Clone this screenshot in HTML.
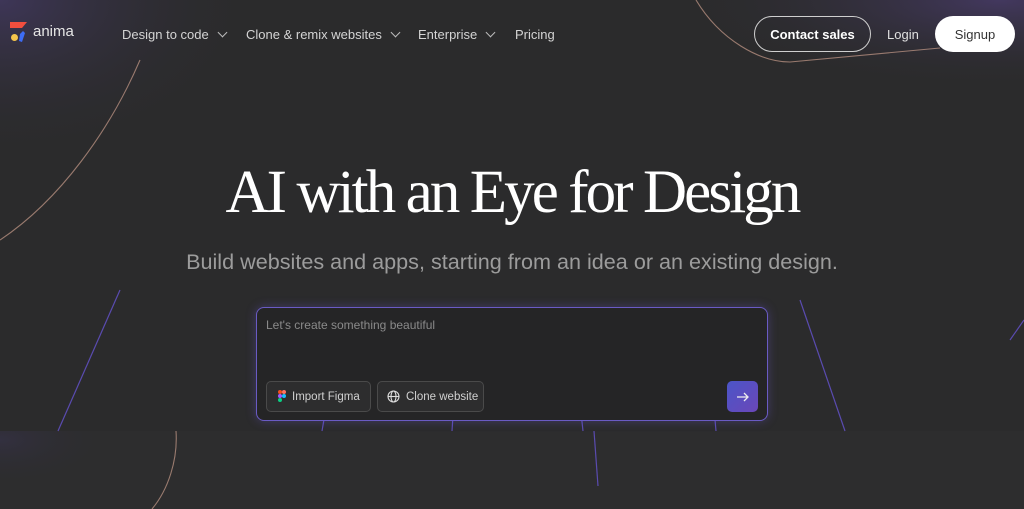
<!DOCTYPE html>
<html><head><meta charset="utf-8"><style>
*{margin:0;padding:0;box-sizing:border-box}
body{width:1024px;height:509px;overflow:hidden;background:#2b2b2c;font-family:"Liberation Sans",sans-serif;position:relative}
.bg{position:absolute;left:0;top:0}
.nav{position:absolute;top:0;left:0;width:1024px;height:68px}
.nav a{position:absolute;color:#d4d4d4;font-size:13px;top:27px;text-decoration:none}
.chev{display:inline-block;width:7px;height:7px;border-right:1.4px solid #bbb;border-bottom:1.4px solid #bbb;transform:rotate(45deg);margin-left:10px;position:relative;top:-3px}
.btn{position:absolute;border-radius:18px;font-size:13px;font-weight:bold;display:flex;align-items:center;justify-content:center}
h1{position:absolute;top:158px;left:0;width:1024px;text-align:center;font-family:"Liberation Serif",serif;font-weight:normal;color:#fff;font-size:61px;letter-spacing:-2.9px}
.sub{position:absolute;top:249px;left:0;width:1024px;text-align:center;color:#9c9c9c;font-size:21.6px}
.box{position:absolute;left:256px;top:307px;width:512px;height:114px;border:1px solid #6a5bc4;border-radius:8px;background:#252526;box-shadow:0 0 10px rgba(110,90,220,.35)}
.ph{position:absolute;left:9px;top:10px;color:#8a8a8a;font-size:12px}
.chip{position:absolute;top:73px;height:31px;border:1px solid #4a4a4a;border-radius:5px;background:#2d2d2e;color:#d0d0d0;font-size:11.5px;display:flex;align-items:center}
.go{position:absolute;left:470px;top:73px;width:31px;height:31px;border-radius:5px;background:linear-gradient(135deg,#4b55c8,#6a47b8);display:flex;align-items:center;justify-content:center}
</style></head><body>
<svg class="bg" width="1024" height="509">
<defs>
<radialGradient id="g1" cx="0" cy="0" r="1" gradientUnits="userSpaceOnUse" gradientTransform="translate(0 0) scale(260 160)"><stop offset="0" stop-color="#3e3658"/><stop offset="1" stop-color="#2b2b2c" stop-opacity="0"/></radialGradient>
<radialGradient id="g2" cx="0" cy="0" r="1" gradientUnits="userSpaceOnUse" gradientTransform="translate(1000 0) scale(330 90)"><stop offset="0" stop-color="#43385f"/><stop offset="1" stop-color="#2b2b2c" stop-opacity="0"/></radialGradient>
<radialGradient id="g3" cx="0" cy="0" r="1" gradientUnits="userSpaceOnUse" gradientTransform="translate(0 440) scale(120 50)"><stop offset="0" stop-color="#333040"/><stop offset="1" stop-color="#2b2b2c" stop-opacity="0"/></radialGradient>
</defs>
<rect width="1024" height="509" fill="url(#g1)"/>
<rect width="1024" height="509" fill="url(#g2)"/>
<rect y="431" width="1024" height="78" fill="#2d2d2e"/>
<rect y="431" width="1024" height="78" fill="url(#g3)"/>
<g stroke="#5a4bb0" stroke-width="1.2" fill="none">
<line x1="120" y1="290" x2="58" y2="431"/>
<line x1="330" y1="385" x2="322" y2="431"/>
<line x1="455" y1="385" x2="452" y2="431"/>
<line x1="578" y1="385" x2="583" y2="431"/>
<line x1="594" y1="431" x2="598" y2="486"/>
<line x1="712" y1="385" x2="716" y2="431"/>
<line x1="800" y1="300" x2="845" y2="431"/>
<line x1="1024" y1="320" x2="1010" y2="340"/>
</g>
<g stroke="#b58e80" stroke-width="1.1" fill="none" opacity=".8">
<path d="M140 60 C110 130 60 200 0 240"/>
<path d="M696 0 C720 40 760 62 790 62 L940 48"/>
<path d="M176 431 C178 460 168 490 152 509"/>
</g>
</svg>
<div class="nav">
<svg style="position:absolute;left:10px;top:22px" width="18" height="22" viewBox="0 0 18 22"><path d="M0 0h17l-5 6H0z" fill="#f24e3e"/><circle cx="4.5" cy="15.5" r="3.5" fill="#f5c54b"/><path d="M10 12l3-3l2 2l-3 9l-3-1z" fill="#3d6cf5"/></svg>
<span style="position:absolute;left:33px;top:23px;color:#e6e6e6;font-size:15px">anima</span>
<a style="left:122px">Design to code<span class="chev"></span></a>
<a style="left:246px">Clone &amp; remix websites<span class="chev"></span></a>
<a style="left:418px">Enterprise<span class="chev"></span></a>
<a style="left:515px">Pricing</a>
<div class="btn" style="left:754px;top:16px;width:117px;height:36px;border:1px solid #cfcfcf;color:#fff">Contact sales</div>
<a style="left:887px;font-weight:normal;color:#e0e0e0">Login</a>
<div class="btn" style="left:935px;top:16px;width:80px;height:36px;background:#fff;color:#333;font-weight:normal">Signup</div>
</div>
<h1>AI with an Eye for Design</h1>
<div class="sub">Build websites and apps, starting from an idea or an existing design.</div>
<div class="box">
<div class="ph">Let's create something beautiful</div>
<div class="chip" style="left:9px;width:105px"><svg style="margin:0 6px 0 11px" width="8" height="13" viewBox="0 0 8 13"><rect x="0" y="0" width="4" height="4" rx="2" fill="#f24e1e"/><rect x="4" y="0" width="4" height="4" rx="2" fill="#ff7262"/><rect x="0" y="4" width="4" height="4" rx="2" fill="#a259ff"/><circle cx="6" cy="6" r="2" fill="#1abcfe"/><rect x="0" y="8" width="4" height="4" rx="2" fill="#0acf83"/></svg>Import Figma</div>
<div class="chip" style="left:120px;width:107px"><svg style="margin:0 6px 0 9px" width="13" height="13" viewBox="0 0 13 13" fill="none" stroke="#ddd" stroke-width="1.1"><circle cx="6.5" cy="6.5" r="5.5"/><ellipse cx="6.5" cy="6.5" rx="2.5" ry="5.5"/><line x1="1" y1="6.5" x2="12" y2="6.5"/></svg>Clone website</div>
<div class="go"><svg width="13" height="10" viewBox="0 0 13 10" fill="none" stroke="#eee" stroke-width="1.3"><path d="M1 5h11M8 1l4 4-4 4"/></svg></div>
</div>
</body></html>
